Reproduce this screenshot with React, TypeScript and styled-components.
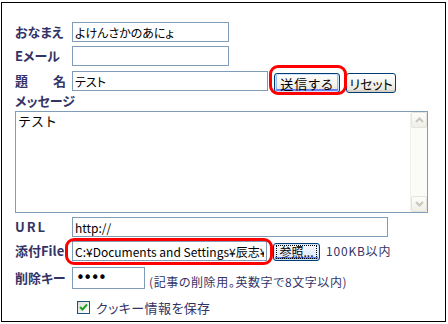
import React from 'react'
import styled, { createGlobalStyle, css } from 'styled-components'

const navy = '#333366'
const jp = '"Noto Sans CJK JP", "Liberation Sans", sans-serif'

const GlobalStyle = createGlobalStyle`
  html, body {
    margin: 0;
    padding: 0;
    background: #fff;
  }
  body {
    font-family: ${jp};
  }
`

const Frame = styled.form`
  box-sizing: border-box;
  width: 445px;
  height: 320px;
  margin: 2px 0 0 1px;
  border: 1px solid #000;
  padding: 19px 0 0 13px;
  display: flex;
  flex-direction: column;
`

const Row = styled.div<{ $top?: number; $h?: number }>`
  display: flex;
  align-items: flex-start;
  margin-top: ${p => p.$top ?? 0}px;
  height: ${p => (p.$h ? `${p.$h}px` : 'auto')};
`

const Label = styled.label<{ $spacing?: number; $lh?: number }>`
  width: 57px;
  flex: none;
  font-size: 13px;
  font-weight: bold;
  color: ${navy};
  letter-spacing: ${p => p.$spacing ?? 0}px;
  line-height: ${p => p.$lh ?? 20}px;
  white-space: nowrap;
  font-feature-settings: 'palt';
`

const TextInput = styled.input<{ $w: number; $h?: number }>`
  box-sizing: border-box;
  width: ${p => p.$w}px;
  height: ${p => p.$h ?? 20}px;
  border: 1px solid #7f9db9;
  padding: 0 2px;
  margin: 0;
  font: 12px ${jp};
  font-feature-settings: 'palt';
  color: #000;
  background: #fff;
  outline: none;
`

const Password = styled(TextInput)`
  font-family: 'DejaVu Sans', sans-serif;
  font-size: 15px;
  letter-spacing: -1.5px;
  padding-left: 3px;
`

const XpButton = styled.button<{ $w: number; $h?: number; $default?: boolean }>`
  box-sizing: border-box;
  width: ${p => p.$w}px;
  height: ${p => p.$h ?? 20}px;
  margin: 0;
  padding: 0;
  border: 1px solid #003c74;
  border-radius: 3px;
  background: linear-gradient(#ffffff, #f4f3ee 55%, #e3e0d6);
  box-shadow: inset 0 -2px 0 #d8d2c4;
  font: 13px ${jp};
  font-feature-settings: 'palt';
  white-space: nowrap;
  color: #000;
  line-height: 1;
  ${p =>
    p.$default &&
    css`
      letter-spacing: 1px;
      box-shadow: inset 0 0 0 1px #cee7ff, inset 0 -2px 0 1px #6982ee, inset 2px 0 0 #a0bcf4,
        inset -2px 0 0 #a0bcf4;
    `}
`

const Marked = styled.span<{ $t: number; $r: number; $b: number; $l: number }>`
  position: relative;
  display: inline-flex;
  &::after {
    content: '';
    position: absolute;
    top: -${p => p.$t}px;
    right: -${p => p.$r}px;
    bottom: -${p => p.$b}px;
    left: -${p => p.$l}px;
    border: 3px solid #ff0000;
    border-radius: 9px;
    pointer-events: none;
  }
`

const Buttons = styled.div`
  display: flex;
  gap: 6px;
  margin: 2px 0 0 6px;
`

const MessageLabel = styled(Label)`
  width: auto;
  line-height: 16px;
`

const MessageBox = styled.div`
  box-sizing: border-box;
  width: 413px;
  height: 102px;
  margin-top: 2px;
  border: 1px solid #7f9db9;
  display: flex;
`

const MessageArea = styled.textarea`
  flex: 1;
  border: 0;
  margin: 0;
  padding: 1px 2px;
  outline: none;
  resize: none;
  overflow: hidden;
  font: 13px ${jp};
  line-height: 16px;
  color: #000;
`

const ScrollTrack = styled.div`
  width: 16px;
  flex: none;
  display: flex;
  flex-direction: column;
  justify-content: space-between;
  background: #fbfbf8;
  border-left: 1px solid #f2f1ec;
`

const ScrollButton = styled.div`
  box-sizing: border-box;
  height: 16px;
  border: 1px solid #e4e3dc;
  border-radius: 2px;
  background: linear-gradient(#fdfdfb, #efeee7);
  display: flex;
  align-items: center;
  justify-content: center;
`

const Browse = styled(XpButton)`
  margin: 2px 0 0 6px;
  font-size: 12px;
  background: linear-gradient(#f6f9ff, #dce6f8);
  box-shadow: inset 0 0 0 1px #cee7ff, inset 0 -2px 0 1px #6982ee;
`

const FocusRing = styled.span`
  display: inline-block;
  padding: 0 2px;
  border: 1px dotted #000;
  line-height: 12px;
`

const Hint = styled.span<{ $left: number }>`
  margin-left: ${p => p.$left}px;
  font-size: 12px;
  color: ${navy};
  white-space: nowrap;
  font-feature-settings: 'palt';
`

const SizeHint = styled(Hint)`
  line-height: 20px;
  letter-spacing: 0.8px;
`

const NoteHint = styled(Hint)`
  align-self: flex-end;
  line-height: 14px;
  letter-spacing: 0.6px;
`

const CheckRow = styled.label`
  display: flex;
  align-items: center;
  gap: 6px;
  margin: 9px 0 0 62px;
  height: 18px;
  font-size: 13px;
  color: ${navy};
  letter-spacing: 0.4px;
  font-feature-settings: 'palt';
`

const CheckBox = styled.span`
  box-sizing: border-box;
  width: 13px;
  height: 13px;
  border: 1px solid #1c5180;
  background: linear-gradient(135deg, #dcdcd7, #ffffff);
  display: inline-flex;
  align-items: center;
  justify-content: center;
`

const Chevron = ({ up }: { up?: boolean }) => (
  <svg width="9" height="6" viewBox="0 0 9 6">
    <path
      d={up ? 'M1 5 L4.5 1.5 L8 5' : 'M1 1 L4.5 4.5 L8 1'}
      fill="none"
      stroke="#c9c7ba"
      strokeWidth="2"
    />
  </svg>
)

export default function App() {
  return (
    <>
      <GlobalStyle />
      <Frame onSubmit={e => e.preventDefault()}>
        <Row>
          <Label>おなまえ</Label>
          <TextInput $w={157} defaultValue="よけんさかのあにょ" />
        </Row>
        <Row $top={4}>
          <Label>Eメール</Label>
          <TextInput $w={157} defaultValue="" />
        </Row>
        <Row $top={5} $h={22}>
          <Label $spacing={6}>題　名</Label>
          <TextInput $w={196} defaultValue="テスト" />
          <Buttons>
            <Marked $t={8} $r={7} $b={2} $l={5}>
              <XpButton type="submit" $w={66} $default>
                送信する
              </XpButton>
            </Marked>
            <XpButton type="reset" $w={50}>
              リセット
            </XpButton>
          </Buttons>
        </Row>
        <MessageLabel>メッセージ</MessageLabel>
        <MessageBox>
          <MessageArea defaultValue="テスト" />
          <ScrollTrack>
            <ScrollButton>
              <Chevron up />
            </ScrollButton>
            <ScrollButton>
              <Chevron />
            </ScrollButton>
          </ScrollTrack>
        </MessageBox>
        <Row $top={4}>
          <Label $spacing={2}>URL</Label>
          <TextInput $w={316} defaultValue="http://" />
        </Row>
        <Row $top={4}>
          <Label>添付File</Label>
          <Marked $t={3} $r={6} $b={4} $l={7}>
            <TextInput $w={195} readOnly defaultValue="C:¥Documents and Settings¥辰志¥デスクトップ¥image.jpg" />
          </Marked>
          <Browse type="button" $w={47} $h={18}>
            <FocusRing>参照...</FocusRing>
          </Browse>
          <SizeHint $left={6}>100KB以内</SizeHint>
        </Row>
        <Row $top={6}>
          <Label $lh={22}>削除キー</Label>
          <Password type="password" $w={73} $h={22} defaultValue="1234" />
          <NoteHint $left={4}>(記事の削除用。英数字で8文字以内)</NoteHint>
        </Row>
        <CheckRow>
          <CheckBox>
            <svg width="9" height="9" viewBox="0 0 9 9">
              <path d="M1 4 L3.5 6.5 L8 1.5" fill="none" stroke="#21a121" strokeWidth="2" />
            </svg>
          </CheckBox>
          クッキー情報を保存
        </CheckRow>
      </Frame>
    </>
  )
}
